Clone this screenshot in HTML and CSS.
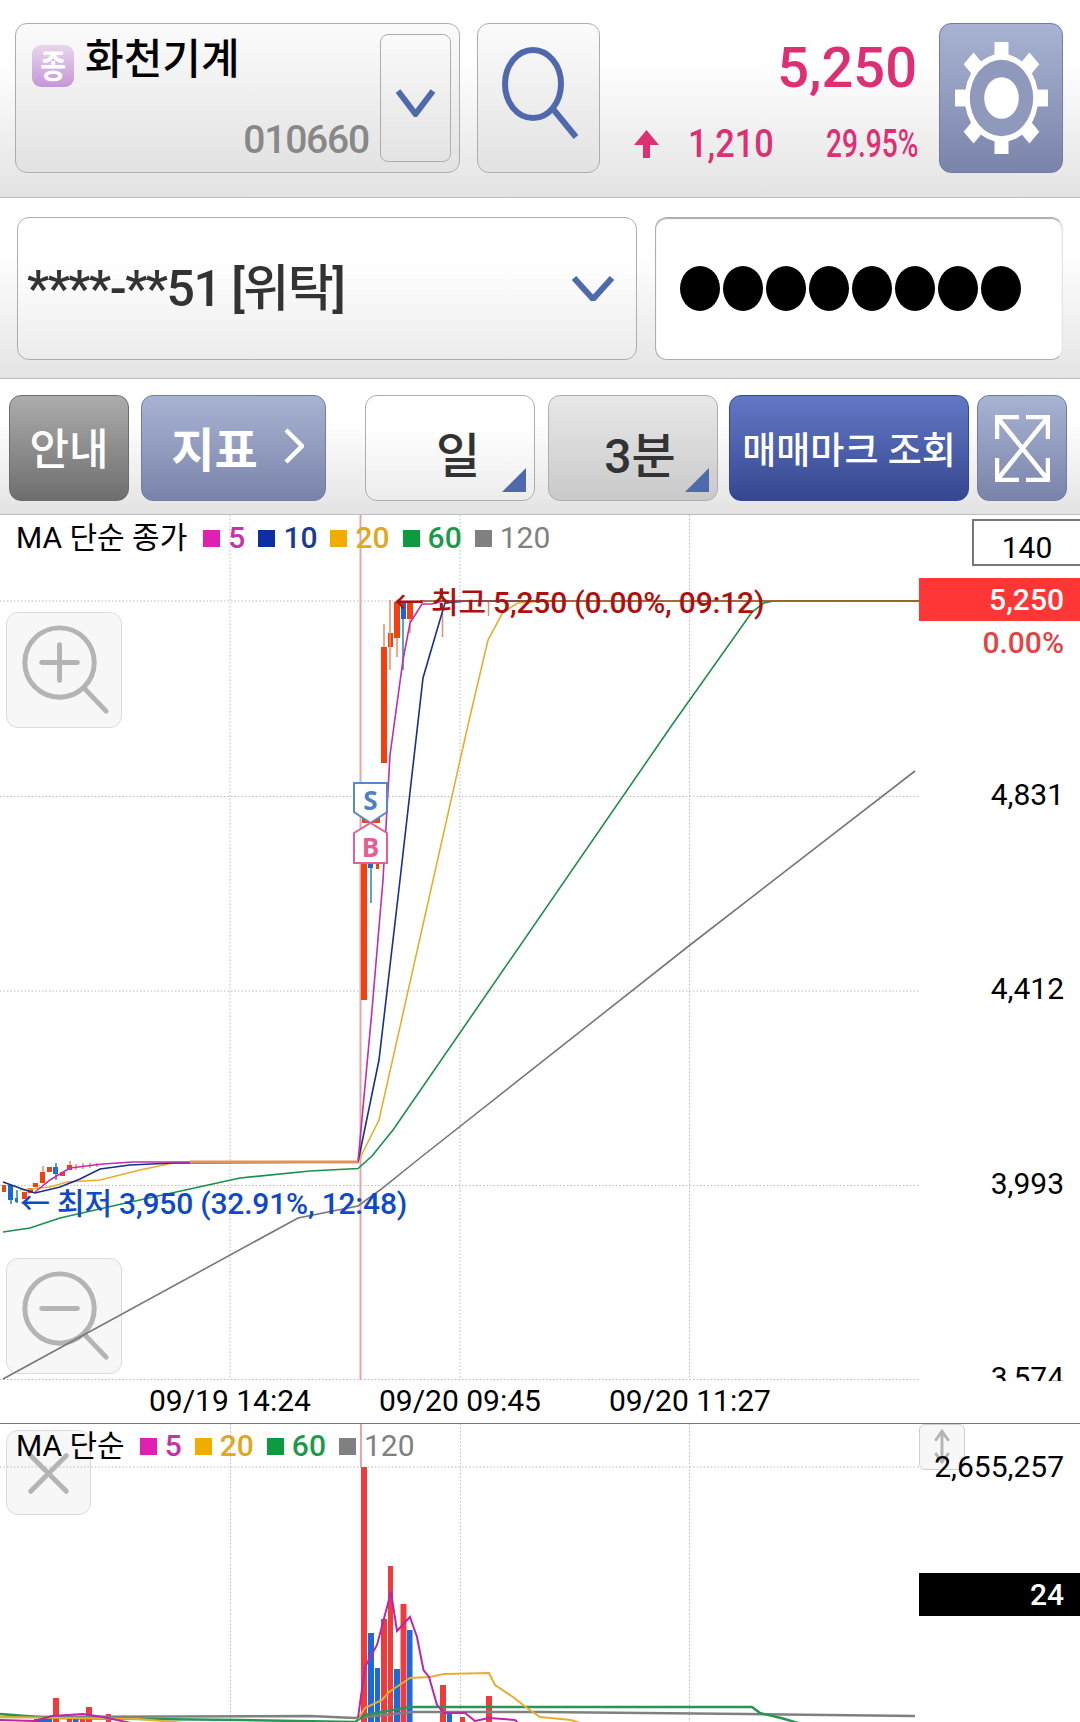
FILE: index.html
```html
<!DOCTYPE html>
<html lang="ko">
<head>
    <meta charset="UTF-8" />
    <meta name="viewport" content="width=device-width, initial-scale=1.0" />
    <title>화천기계 차트</title>
    <link rel="stylesheet" href="styles.css">
</head>
<body>

    <!-- Stock header -->
    <div class="band stock-bar">
        <div class="btn combo">
            <div class="combo-main">
                <div class="combo-name"><span class="badge"><span class="badge-text">종</span></span><span class="stock-name">화천기계</span></div>
                <div class="stock-code">010660</div>
            </div>
            <div class="btn combo-drop">
                <svg class="chev" viewBox="0 0 39 28"><path d="M2 2 L19.5 25 L37 2" /></svg>
            </div>
        </div>
        <div class="btn search-btn">
            <svg viewBox="0 0 123 149" class="search-icon">
                <ellipse cx="55" cy="60" rx="28" ry="34" />
                <path d="M75 85 L98 113" />
            </svg>
        </div>
        <div class="quote">
            <div class="price">5,250</div>
            <div class="change">
                <svg class="up-arrow" viewBox="0 0 25 28"><path d="M12.5 0 L25 15 L16 15 L16 28 L9 28 L9 15 L0 15 Z" /></svg>
                <span class="change-val">1,210</span>
                <span class="change-pct">29.95%</span>
            </div>
        </div>
        <div class="btn steel gear-btn">
            <svg class="gear" viewBox="-46.5 -46.5 93 93" preserveAspectRatio="none">
                <rect x="-7" y="-46.5" width="14" height="93" />
                <rect x="-46.5" y="-7" width="93" height="14" />
                <rect x="-7" y="-46.5" width="14" height="93" transform="rotate(45)" />
                <rect x="-7" y="-46.5" width="14" height="93" transform="rotate(-45)" />
                <circle r="36.7" class="gear-rim" />
                <circle r="31.7" class="gear-body" />
                <circle r="17.3" class="gear-rim" />
            </svg>
        </div>
    </div>

    <!-- Account row -->
    <div class="band account-bar">
        <div class="btn account">
            <span class="account-text">****-**51 [위탁]</span>
            <svg class="chev chev-acct" viewBox="0 0 42 25"><path d="M2 2 L21 23 L40 2" /></svg>
        </div>
        <div class="password">
            <span class="dot"></span><span class="dot"></span><span class="dot"></span><span class="dot"></span>
            <span class="dot"></span><span class="dot"></span><span class="dot"></span><span class="dot"></span>
        </div>
    </div>

    <!-- Toolbar -->
    <div class="band toolbar">
        <div class="btn tool-guide">안내</div>
        <div class="btn steel tool-index">
            <span>지표</span>
            <svg class="tool-chev" viewBox="0 0 20 36"><path d="M2 2 L18 18 L2 34" /></svg>
        </div>
        <div class="btn tool-pick tool-day"><span>일</span><i class="corner"></i></div>
        <div class="btn tool-pick tool-min"><span>3분</span><i class="corner"></i></div>
        <div class="btn tool-mark">매매마크 조회</div>
        <div class="btn steel tool-expand">
            <svg viewBox="0 0 55 67" class="expand-icon">
                <path d="M2 2 L53 65 M53 2 L2 65" />
                <path d="M2 24 L2 2 L24 2 M31 2 L53 2 L53 24 M2 43 L2 65 L24 65 M31 65 L53 65 L53 43" />
            </svg>
        </div>
    </div>

    <!-- Price chart -->
    <div class="price-chart">
        <div class="zoom-btn zoom-in">
            <svg viewBox="0 0 115 115"><circle cx="53" cy="50" r="35" /><path d="M35 50 H71 M53 32 V68 M78 76 L100 99" /></svg>
        </div>
        <div class="zoom-btn zoom-out">
            <svg viewBox="0 0 115 115"><circle cx="53" cy="50" r="35" /><path d="M35 50 H71 M78 76 L100 99" /></svg>
        </div>

        <svg class="plot" viewBox="0 515 1080 866">
            <g class="grid">
                <path d="M230 515 V1380 M460 515 V1380 M689.5 515 V1380" />
                <path d="M0 601 H919 M0 796.5 H919 M0 991 H919 M0 1185.5 H919 M0 1379.5 H919" />
            </g>
            <path class="cursor" d="M360.5 515 V1380" />

            <g class="up">
                <rect x="381" y="647" width="6" height="116" />
                <rect x="388" y="633" width="5" height="14" />
                <rect x="394" y="602" width="6" height="36" />
                <rect x="407" y="603" width="6" height="16" />
                <rect x="361" y="863" width="6" height="137" />
                <rect x="362" y="815" width="18" height="8" />
                <rect x="376" y="864" width="3" height="5" />
                <rect x="40" y="1172" width="5" height="11" />
                <rect x="47" y="1167" width="5" height="5" />
                <rect x="60" y="1172" width="5" height="4" />
                <rect x="67" y="1165" width="5" height="5" />
                <rect x="2" y="1185" width="4" height="7" />
                <rect x="22" y="1192" width="5" height="7" />
                <rect x="28" y="1188" width="5" height="5" />
                <rect x="33" y="1183" width="5" height="4" />
            </g>
            <g class="down">
                <rect x="401" y="603" width="5" height="16" />
                <rect x="368" y="864" width="5" height="4" />
                <rect x="53" y="1167" width="5" height="7" />
                <rect x="8" y="1185" width="5" height="15" />
                <rect x="15" y="1198" width="3" height="4" />
            </g>
            <path class="wick-up" d="M384 624 V647 M390 600 V670 M397 638 V657 M410 619 V633 M442.5 613 V637 M488.5 601 V616 M43 1166 V1172 M70 1161 V1165 M76 1164 V1170 M83 1163 V1169 M90 1163 V1168 M97 1163 V1167" />
            <path class="wick-down" d="M403 619 V670 M371 868 V903 M56 1163 V1180 M17 1190 V1203 M11 1200 V1204" />
            <path class="line l-120" d="M3 1379 L298 1218 L358 1206 L380 1190 L420 1158 L690 945 L915 771" />
            <path class="line l-60" d="M3 1232 L30 1228 L60 1218 L117 1205 L240 1178 L310 1171 L358 1168.5 L372 1156 L393 1130 L672 725 L752 612 L764 603 L774 601 L919 601" />
            <path class="line l-20" d="M20 1190 L50 1187 L67 1182 L100 1180 L140 1170 L173 1163 L358 1162 L379 1120 L468 725 L488 640 L503 612 L518 603 L545 601 L919 601" />
            <path class="line l-10" d="M3 1182 L25 1190 L35 1193 L60 1187 L80 1179 L100 1169 L130 1165 L173 1163 L358 1162 L379 1060 L400 880 L423 678 L437 630 L445 603 L467 601 L540 601" />
            <path class="line l-5" d="M35 1192 L50 1180 L70 1168 L103 1164 L133 1162 L358 1162 L372 1010 L383 880 L390 755 L403 660 L410 623 L422 604 L432 604 L443 601 L490 601" />
            <path class="flat-band" d="M190 1162 H358" />
            <path class="high-line" d="M420 601 H919" />

            <path class="mark-s" d="M354 783 H387 V812 L370.5 823 L354 812 Z" />
            <path class="mark-b" d="M354 833 L370.5 823 L387 833 V863 H354 Z" />
        </svg>

        <div class="mark-label label-s">S</div>
        <div class="mark-label label-b">B</div>

        <div class="note note-high">← 최고 5,250 (0.00%, 09:12)</div>
        <div class="note note-low">← 최저 3,950 (32.91%, 12:48)</div>

        <div class="legend">
            <span class="legend-title">MA 단순 종가</span>
            <span class="sq c-5"></span><span class="val t-5">5</span>
            <span class="sq c-10"></span><span class="val t-10">10</span>
            <span class="sq c-20"></span><span class="val t-20">20</span>
            <span class="sq c-60"></span><span class="val t-60">60</span>
            <span class="sq c-120"></span><span class="val t-120">120</span>
        </div>

        <div class="count-box">140</div>
        <div class="tag tag-red">5,250</div>
        <div class="tag-pct">0.00%</div>

        <div class="y-axis">
            <div class="tick">4,831</div>
            <div class="tick">4,412</div>
            <div class="tick">3,993</div>
            <div class="tick">3,574</div>
        </div>
    </div>

    <div class="x-axis">
        <span>09/19 14:24</span>
        <span>09/20 09:45</span>
        <span>09/20 11:27</span>
    </div>

    <!-- Volume chart -->
    <div class="volume-chart">
        <div class="zoom-btn close-btn">
            <svg viewBox="0 0 84 84"><path d="M24 25 L60 61 M60 25 L24 61" /></svg>
        </div>
        <div class="zoom-btn arrow-btn">
            <svg viewBox="0 0 46 45"><path d="M23 6 V35 M16 16 L23 6 L30 16 M16 29 L23 38 L30 29" /></svg>
        </div>

        <svg class="plot" viewBox="0 1424 1080 298">
            <g class="grid">
                <path d="M230.5 1424 V1722 M460.5 1424 V1722 M689.5 1424 V1722" />
                <path d="M0 1467 H919" />
            </g>
            <path class="cursor" d="M361 1424 V1467" />
            <g class="vol-up">
                <rect x="361" y="1467" width="6" height="255" />
                <rect x="381" y="1619" width="6" height="103" />
                <rect x="388" y="1566" width="5" height="156" />
                <rect x="400.5" y="1604" width="6" height="118" />
                <rect x="440" y="1685" width="6" height="37" />
                <rect x="460" y="1717" width="5" height="5" />
                <rect x="486" y="1696" width="6" height="26" />
                <rect x="53" y="1698" width="6" height="24" />
                <rect x="86" y="1707" width="6" height="15" />
                <rect x="106" y="1714" width="5" height="8" />
                <rect x="67" y="1717" width="5" height="5" />
                <rect x="80" y="1719" width="5" height="3" />
            </g>
            <g class="vol-down">
                <rect x="368" y="1633" width="6" height="89" />
                <rect x="375" y="1668" width="5" height="54" />
                <rect x="394" y="1669" width="6" height="53" />
                <rect x="407" y="1630" width="5.5" height="92" />
                <rect x="447" y="1713" width="5" height="9" />
                <rect x="73" y="1719" width="5.5" height="3" />
                <rect x="34" y="1719" width="18" height="3" />
            </g>
            <path class="vline v-120" d="M0 1717 L310 1716 L355 1718 L365 1717 L413 1712 L540 1712 L747 1714 L915 1716" />
            <path class="vline v-60" d="M0 1714 L52 1718 L241 1720 L355 1722 L365 1715 L393 1710 L410 1707 L752 1707 L760 1713 L781 1718 L798 1723" />
            <path class="vline v-20" d="M0 1717 L138 1719 L186 1723 M358 1719 L365 1708 L382 1700 L389 1692 L410 1678 L430 1677 L444 1674 L489 1673 L495 1685 L513 1697 L527 1708 L540 1717 L571 1720 L580 1723" />
            <path class="vline v-5" d="M0 1720 L34 1721 L52 1716 L83 1714 L103 1717 L131 1723 M358 1718 L365 1667 L377 1645 L391 1592 L397 1631 L410 1617 L417 1637 L423.5 1670 L429 1677 L437 1705 L444 1713 L465 1713 L475 1721 L489 1718 L515 1720 L518 1723" />
        </svg>

        <div class="legend legend-vol">
            <span class="legend-title">MA 단순</span>
            <span class="sq c-5"></span><span class="val t-5">5</span>
            <span class="sq c-20"></span><span class="val t-20">20</span>
            <span class="sq c-60"></span><span class="val t-60">60</span>
            <span class="sq c-120"></span><span class="val t-120">120</span>
        </div>

        <div class="vol-max">2,655,257</div>
        <div class="tag tag-black">24</div>
    </div>

</body>
</html>
```

FILE: styles.css
```css
body {
    margin: 0;
    width: 1080px;
    height: 1722px;
    overflow: hidden;
    background: #fff;
    font-family: Roboto, 'Noto Sans CJK KR', sans-serif;
    color: #000;
}

svg {
    display: block;
}

.band {
    display: flex;
    box-sizing: border-box;
    background: linear-gradient(#fff 30%, #e3e3e3);
    border-bottom: 1px solid #bdbdbd;
}

.btn {
    box-sizing: border-box;
    border: 1px solid #adadad;
    border-radius: 12px;
    background: linear-gradient(#fbfbfb, #e2e2e2);
}

.steel {
    border-color: #727da3;
    background: linear-gradient(#a8b3d3, #7a84aa);
}

/* Stock header */
.stock-bar {
    height: 198px;
    padding: 23px 17px 0 15px;
}

.combo {
    display: flex;
    width: 445px;
    height: 150px;
    padding: 10px 8px 10px 16px;
}

.combo-main {
    flex: 1;
    display: flex;
    flex-direction: column;
    justify-content: space-between;
}

.combo-name {
    display: flex;
    align-items: flex-start;
    gap: 11px;
}

.badge {
    display: flex;
    align-items: center;
    justify-content: center;
    width: 42px;
    height: 42px;
    margin-top: 11px;
    border-radius: 9px;
    background: linear-gradient(#e8d6ec, #c596d7);
}

.badge-text {
    color: #fff;
    font-size: 33px;
    font-weight: 700;
    line-height: 1;
    transform: scaleX(0.85);
}

.stock-name {
    font-size: 42px;
    font-weight: 500;
    line-height: 44px;
    margin-top: 4px;
}

.stock-code {
    align-self: flex-end;
    margin-right: 11px;
    margin-bottom: 6px;
    color: #888;
    font-size: 39px;
    font-weight: 500;
    line-height: 32px;
    letter-spacing: -1.2px;
}

.combo-drop {
    display: flex;
    align-items: center;
    justify-content: center;
    width: 71px;
    height: 128px;
    padding-top: 9px;
    border-radius: 8px;
    background: linear-gradient(#fafafa, #e3e3e3);
}

.chev {
    width: 39px;
    height: 28px;
    fill: none;
    stroke: #4f69ad;
    stroke-width: 6;
}

.search-btn {
    width: 123px;
    height: 150px;
    margin-left: 17px;
}

.search-icon {
    width: 123px;
    height: 149px;
    fill: none;
    stroke: #5068ad;
    stroke-width: 6;
}

.quote {
    flex: 1;
    display: flex;
    flex-direction: column;
    align-items: flex-end;
    padding-right: 22px;
}

.price {
    margin-top: 17px;
    color: #df2f74;
    font-size: 56px;
    font-weight: 500;
    line-height: 56px;
}

.change {
    display: flex;
    align-items: center;
    margin-top: 30px;
    color: #df2f74;
    font-size: 39px;
    font-weight: 500;
    line-height: 36px;
}

.up-arrow {
    width: 25px;
    height: 28px;
    margin-right: 29px;
    fill: #df2f74;
}

.change-val {
    display: inline-block;
    width: 85px;
    transform: scaleX(0.88);
    transform-origin: left center;
}

.change-pct {
    display: inline-block;
    width: 91px;
    margin-left: 53px;
    white-space: nowrap;
    transform: scaleX(0.72);
    transform-origin: left center;
}

.gear-btn {
    display: flex;
    align-items: center;
    justify-content: center;
    width: 124px;
    height: 150px;
}

.gear {
    width: 93px;
    height: 112px;
    fill: #fff;
}

.gear-rim {
    fill: #fff;
}

.gear-body {
    fill: #8f99bb;
}

/* Account row */
.account-bar {
    height: 181px;
    padding: 19px 17px 0 17px;
    background: linear-gradient(#fff 30%, #e4e4e4);
}

.account {
    display: flex;
    align-items: center;
    justify-content: space-between;
    width: 620px;
    height: 143px;
    padding: 0 22px 0 9px;
    background: linear-gradient(#fff 30%, #ececec);
}

.account-text {
    color: #333;
    font-size: 50px;
    font-weight: 500;
    line-height: 1;
    letter-spacing: -1.5px;
}

.chev-acct {
    width: 42px;
    height: 25px;
}

.password {
    display: flex;
    align-items: center;
    gap: 3px;
    box-sizing: border-box;
    width: 408px;
    height: 143px;
    margin-left: 18px;
    padding-left: 24px;
    border: 1px solid #adadad;
    border-right-color: #e4e4e4;
    border-radius: 12px;
    background: #fff;
    box-shadow: inset 0 1px 1px #aaa;
}

.dot {
    width: 40px;
    height: 45px;
    border-radius: 50%;
    background: #000;
}

/* Toolbar */
.toolbar {
    height: 136px;
    padding: 16px 0 0 9px;
}

.toolbar .btn {
    display: flex;
    align-items: center;
    justify-content: center;
    position: relative;
    height: 106px;
}

.toolbar .tool-guide {
    width: 120px;
    padding-bottom: 4px;
    color: #fff;
    font-size: 43px;
    font-weight: 500;
    border-color: #6c6c6c;
    background: linear-gradient(#acacac, #6e6e6e);
}

.toolbar .tool-index {
    width: 185px;
    margin-left: 12px;
    padding: 0 0 4px 8px;
    gap: 26px;
    color: #fff;
    font-size: 47px;
    font-weight: 700;
}

.tool-chev {
    width: 20px;
    height: 36px;
    fill: none;
    stroke: #fff;
    stroke-width: 4.5;
}

.toolbar .tool-pick {
    width: 170px;
    padding-top: 8px;
    color: #333;
    font-size: 48px;
    font-weight: 500;
}

.toolbar .tool-day {
    margin-left: 39px;
    padding-left: 16px;
    background: linear-gradient(#fff 30%, #ececec);
}

.toolbar .tool-min {
    margin-left: 13px;
    padding-left: 14px;
    background: linear-gradient(#e8e8e8, #c9c9c9);
}

.corner {
    position: absolute;
    right: 8px;
    bottom: 8px;
    width: 0;
    height: 0;
    border-left: 24px solid transparent;
    border-bottom: 24px solid #4f69ad;
}

.tool-mark {
    width: 240px;
    margin-left: 11px;
    color: #fff;
    font-size: 37px;
    font-weight: 500;
    border-color: #364790;
    background: linear-gradient(#6278c5, #364790);
}

.tool-expand {
    width: 90px;
    margin-left: 8px;
}

.expand-icon {
    width: 55px;
    height: 67px;
    fill: none;
    stroke: #fff;
    stroke-width: 4.5;
}

/* Charts */
.price-chart,
.volume-chart {
    position: relative;
    overflow: hidden;
}

.price-chart {
    height: 866px;
}

.plot {
    position: absolute;
    left: 0;
    top: 0;
    width: 1080px;
    height: 100%;
    fill: none;
}

.grid path {
    stroke: #bcbcbc;
    stroke-width: 1;
    stroke-dasharray: 1.5 2;
}

.cursor {
    stroke: #e8a5a5;
    stroke-width: 2;
}

.up rect,
.vol-up rect {
    stroke: none;
}

.up rect {
    fill: #f2410f;
}

.down rect {
    fill: #1a66d6;
}

.vol-up rect {
    fill: #f23a3a;
}

.vol-down rect {
    fill: #1a6ad8;
}

.wick-up {
    stroke: #ee8a68;
    stroke-width: 1.5;
}

.wick-down {
    stroke: #2a86a8;
    stroke-width: 1.5;
}

.flat-band {
    stroke: #dd9460;
    stroke-width: 3;
}

.line {
    stroke-width: 1.6;
}

.l-120 { stroke: #777; }
.l-60 { stroke: #1a9048; }
.l-20 { stroke: #e8ae2a; }
.l-10 { stroke: #16308e; }
.l-5 { stroke: #c32cae; }

.high-line {
    stroke: #8e4d2a;
    stroke-width: 1.5;
}

.vline {
    stroke-width: 2;
}

.v-120 { stroke: #808080; stroke-width: 2.5; }
.v-60 { stroke: #2a9455; stroke-width: 2.5; }
.v-20 { stroke: #e6ae32; }
.v-5 { stroke: #b828a8; }

.mark-s {
    fill: #fff;
    stroke: #5b86c9;
    stroke-width: 2;
}

.mark-b {
    fill: #fff;
    stroke: #e35f95;
    stroke-width: 2;
}

.mark-label {
    position: absolute;
    left: 354px;
    width: 33px;
    text-align: center;
    font-family: 'Open Sans', sans-serif;
    font-size: 26px;
    font-weight: 700;
    line-height: 28px;
}

.label-s {
    top: 271px;
    color: #4f7fc6;
}

.label-b {
    top: 318px;
    color: #e35f95;
}

.note {
    position: absolute;
    font-size: 30px;
    font-weight: 500;
    line-height: 36px;
    letter-spacing: -0.2px;
    white-space: nowrap;
}

.note-high {
    left: 394px;
    top: 70px;
    color: #ae1010;
}

.note-low {
    left: 20px;
    top: 671px;
    color: #0e49c9;
}

.legend {
    position: absolute;
    left: 16px;
    top: 5px;
    display: flex;
    align-items: center;
    font-size: 30px;
    line-height: 36px;
}

.legend-title {
    margin-right: 16px;
}

.sq {
    width: 17px;
    height: 17px;
    margin-right: 8px;
}

.val {
    margin-right: 13px;
    font-size: 30px;
    font-weight: 500;
}

.c-5 { background: #e020b0; }
.c-10 { background: #0c2fa6; }
.c-20 { background: #f0ad00; }
.c-60 { background: #0e9a3e; }
.c-120 { background: #808080; }

.t-5 { color: #c832a8; }
.t-10 { color: #1a3a9a; }
.t-20 { color: #e0a820; }
.t-60 { color: #1a9a4a; }
.t-120 { color: #808080; font-weight: 400; }

.zoom-btn {
    position: absolute;
    box-sizing: border-box;
    border: 1px solid #dcdcdc;
    border-radius: 12px;
    background: #f7f7f7;
}

.zoom-btn svg {
    width: 100%;
    height: 100%;
    fill: none;
    stroke: #b4b4b4;
    stroke-width: 5;
    stroke-linecap: round;
}

.zoom-in {
    left: 6px;
    top: 97px;
    width: 116px;
    height: 116px;
}

.zoom-out {
    left: 6px;
    top: 743px;
    width: 116px;
    height: 116px;
}

.count-box {
    position: absolute;
    right: 0;
    top: 4px;
    box-sizing: border-box;
    width: 108px;
    height: 47px;
    padding-top: 9px;
    border: 2px solid #777;
    border-right: 0;
    text-align: center;
    font-size: 30px;
    line-height: 36px;
}

.tag {
    position: absolute;
    right: 0;
    box-sizing: border-box;
    width: 161px;
    height: 43px;
    padding-right: 16px;
    color: #fff;
    text-align: right;
    font-size: 30px;
    font-weight: 500;
    line-height: 43px;
}

.tag-red {
    top: 63px;
    background: #ff3636;
}

.tag-pct {
    position: absolute;
    right: 16px;
    top: 110px;
    color: #e24444;
    font-size: 30px;
    font-weight: 500;
    line-height: 36px;
}

.y-axis {
    position: absolute;
    right: 16px;
    top: 262px;
    text-align: right;
}

.tick {
    height: 194.3px;
    font-size: 30px;
    line-height: 36px;
}

.x-axis {
    display: flex;
    gap: 68px;
    box-sizing: border-box;
    height: 43px;
    padding: 2px 0 0 149px;
    border-bottom: 1.5px solid #777;
    font-size: 30px;
    line-height: 36px;
}

.volume-chart {
    height: 298px;
}

.close-btn {
    left: 6px;
    top: 6px;
    width: 85px;
    height: 85px;
}

.arrow-btn {
    left: 919px;
    top: 0;
    width: 46px;
    height: 46px;
    border-radius: 6px;
    border-color: #cfcfcf;
}

.arrow-btn svg {
    stroke-width: 3;
    stroke-linecap: butt;
}

.legend-vol {
    top: 4px;
}

.legend-vol .legend-title {
    margin-right: 15px;
}

.vol-max {
    position: absolute;
    right: 16px;
    top: 25px;
    font-size: 30px;
    line-height: 36px;
}

.tag-black {
    top: 149px;
    background: #000;
}
```
